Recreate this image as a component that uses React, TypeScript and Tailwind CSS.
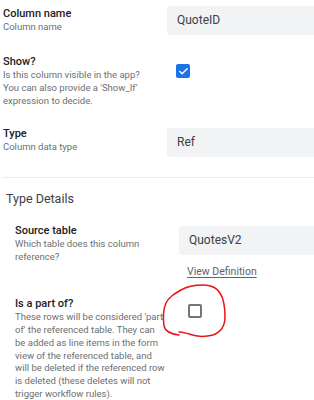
import { Check } from "lucide-react";

function Label({ title, desc }: { title: string; desc: string }) {
  return (
    <div className="w-[150px] shrink-0">
      <div className="text-[11px] leading-[14px] font-medium text-[#202124]">{title}</div>
      <div className="text-[9.5px] leading-[12.75px] text-[#6b6f73]">{desc}</div>
    </div>
  );
}

function Field({ value }: { value: string }) {
  return (
    <div className="h-[29px] w-[220px] shrink-0 rounded-[3px] bg-[#f1f3f4] px-[10px] text-[12px] leading-[29px] text-[#3c4043]">
      {value}
    </div>
  );
}

export default function App() {
  return (
    <div
      className="relative h-[400px] w-[314px] overflow-hidden bg-white"
      style={{ fontFamily: "Roboto, 'Liberation Sans', sans-serif" }}
    >
      <div className="flex flex-col pl-[3px]">
        <div className="mt-[6px] flex gap-[14px]">
          <div className="mt-[1px]">
            <Label title="Column name" desc="Column name" />
          </div>
          <Field value="QuoteID" />
        </div>

        <div className="mt-[20px] flex gap-[14px]">
          <Label
            title="Show?"
            desc="Is this column visible in the app? You can also provide a 'Show_If' expression to decide."
          />
          <div className="mt-[9px] ml-[9px] flex h-[14px] w-[14px] items-center justify-center rounded-[2px] bg-[#1a73e8]">
            <Check size={11} strokeWidth={3} color="white" />
          </div>
        </div>

        <div className="mt-[20px] flex gap-[14px]">
          <Label title="Type" desc="Column data type" />
          <div className="mt-[1px]">
            <Field value="Ref" />
          </div>
        </div>

        <div className="mt-[20px] h-px bg-[#e8eaed]" />

        <div className="mt-[13px] pl-[3px] text-[12.5px] leading-[16px] text-[#3c4043]">Type Details</div>

        <div className="mt-[17px] flex flex-col pl-[12px]">
          <div className="flex gap-[14px]">
            <Label title="Source table" desc="Which table does this column reference?" />
            <div className="mt-[2px] flex flex-col">
              <Field value="QuotesV2" />
              <span className="mt-[10px] ml-[8px] text-[10.5px] leading-[13px] text-[#5f6368] underline underline-offset-2">
                View Definition
              </span>
            </div>
          </div>

          <div className="mt-[19px] flex gap-[14px]">
            <Label
              title="Is a part of?"
              desc="These rows will be considered 'part of' the referenced table. They can be added as line items in the form view of the referenced table, and will be deleted if the referenced row is deleted (these deletes will not trigger workflow rules)."
            />
            <div className="mt-[7px] ml-[9px] h-[14px] w-[14px] rounded-[2px] border-2 border-[#757575]" />
          </div>
        </div>
      </div>

      <svg className="absolute left-[157px] top-[278px]" width="80" height="66" viewBox="0 0 80 66" fill="none">
        <path
          d="M22 57 C14 56 8 53 7 48 C6 41 6 32 9 25 C12 19 17 16 24 12 C31 8 38 7 46 7 C54 7 60 10 63 15 C67 21 68 29 68 39 C68 47 64 54 56 57 C48 59 40 59 32 56 C28 55 25 54 22 54"
          stroke="#e8141a"
          strokeWidth="1.5"
          strokeLinecap="round"
        />
      </svg>
    </div>
  );
}
